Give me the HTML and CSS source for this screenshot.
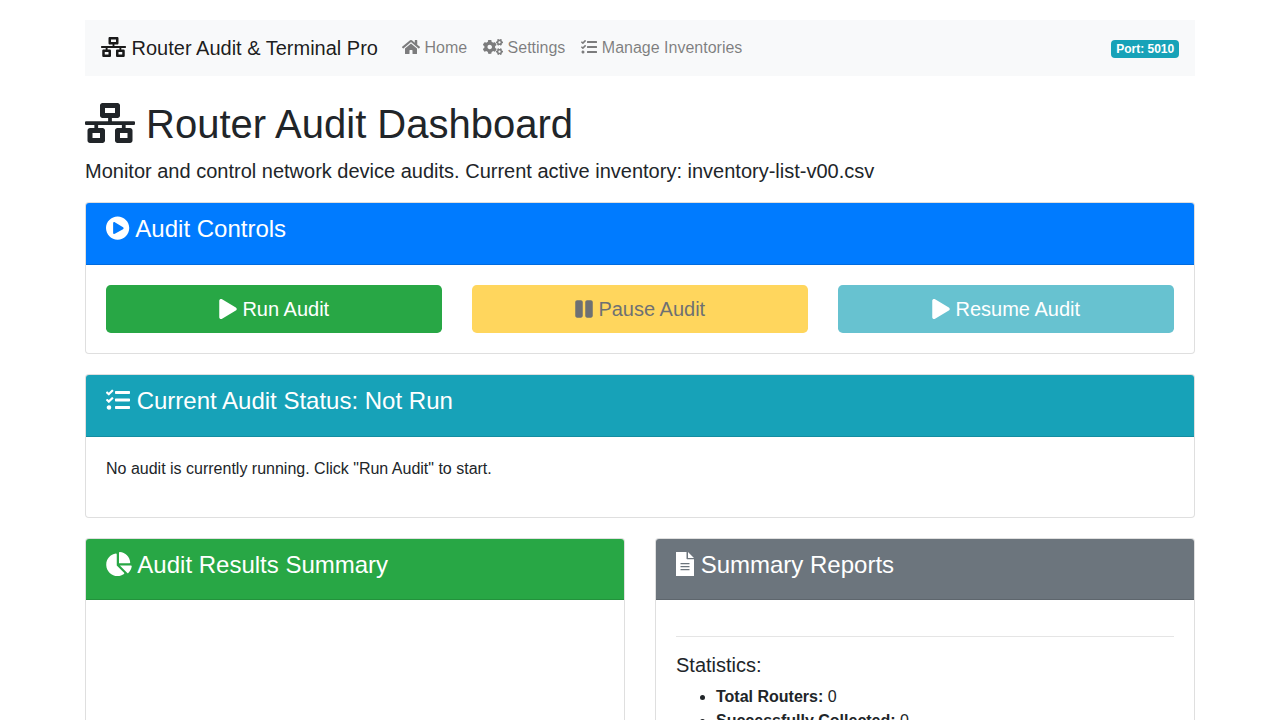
FILE: index.html
```html
<!DOCTYPE html>
<html lang="en">
<head>
<meta charset="utf-8">
<title>Router Audit &amp; Terminal Pro</title>
<link rel="stylesheet" href="styles.css">
</head>
<body>
<svg class="sprite" aria-hidden="true">
  <symbol id="network" viewBox="0 0 640 512"><path d="M640 264v-16c0-8.84-7.16-16-16-16H344v-40h72c17.67 0 32-14.33 32-32V32c0-17.67-14.33-32-32-32H224c-17.67 0-32 14.33-32 32v128c0 17.67 14.33 32 32 32h72v40H16c-8.84 0-16 7.16-16 16v16c0 8.84 7.16 16 16 16h104v40H64c-17.67 0-32 14.33-32 32v128c0 17.67 14.33 32 32 32h160c17.67 0 32-14.33 32-32V352c0-17.67-14.33-32-32-32h-56v-40h304v40h-56c-17.67 0-32 14.33-32 32v128c0 17.67 14.33 32 32 32h160c17.67 0 32-14.33 32-32V352c0-17.67-14.33-32-32-32h-56v-40h104c8.84 0 16-7.16 16-16zM256 128V64h128v64H256zm-64 320H96v-64h96v64zm352 0h-96v-64h96v64z"/></symbol>
  <symbol id="home" viewBox="0 0 576 512"><path d="M280.37 148.26L96 300.11V464a16 16 0 0 0 16 16l112.06-.29a16 16 0 0 0 15.92-16V368a16 16 0 0 1 16-16h64a16 16 0 0 1 16 16v95.64a16 16 0 0 0 16 16.05L464 480a16 16 0 0 0 16-16V300L295.67 148.26a12.19 12.19 0 0 0-15.3 0zM571.6 251.47L488 182.56V44.05a12 12 0 0 0-12-12h-56a12 12 0 0 0-12 12v72.61L318.47 43a48 48 0 0 0-61 0L4.34 251.47a12 12 0 0 0-1.6 16.9l25.5 31A12 12 0 0 0 45.15 301l235.22-193.74a12.19 12.19 0 0 1 15.3 0L530.9 301a12 12 0 0 0 16.9-1.6l25.5-31a12 12 0 0 0-1.7-16.93z"/></symbol>
  <symbol id="cogs" viewBox="0 0 640 512">
    <path id="small-cog" d="M512.1 191l-8.2 14.3c-3 5.3-9.4 7.5-15.1 5.4-11.8-4.4-22.6-10.7-32.1-18.6-4.6-3.8-5.8-10.5-2.8-15.7l8.2-14.3c-6.9-8-12.3-17.3-15.9-27.4h-16.5c-6 0-11.2-4.3-12.2-10.3-2-12-2.1-24.6 0-37.1 1-6 6.2-10.4 12.2-10.4h16.5c3.6-10.1 9-19.4 15.9-27.4l-8.2-14.3c-3-5.2-1.9-11.9 2.8-15.7 9.5-7.9 20.4-14.2 32.1-18.6 5.7-2.1 12.1.1 15.1 5.4l8.2 14.3c10.5-1.9 21.2-1.9 31.7 0L552 6.3c3-5.3 9.4-7.5 15.1-5.4 11.8 4.4 22.6 10.7 32.1 18.6 4.6 3.8 5.8 10.5 2.8 15.7l-8.2 14.3c6.9 8 12.3 17.3 15.9 27.4h16.5c6 0 11.2 4.3 12.2 10.3 2 12 2.1 24.6 0 37.1-1 6-6.2 10.4-12.2 10.4h-16.5c-3.6 10.1-9 19.4-15.9 27.4l8.2 14.3c3 5.2 1.9 11.9-2.8 15.7-9.5 7.9-20.4 14.2-32.1 18.6-5.7 2.1-12.1-.1-15.1-5.4l-8.2-14.3c-10.4 1.9-21.2 1.9-31.7 0zm-10.5-58.8c38.5 29.6 82.4-14.3 52.8-52.8-38.5-29.7-82.4 14.3-52.8 52.8z"/>
    <use href="#small-cog" transform="translate(0 299)"/>
    <path d="M386.3 286.1l33.7 16.8c10.1 5.8 14.5 18.1 10.5 29.1-8.9 24.2-26.4 46.4-42.6 65.8-7.4 8.9-20.2 11.1-30.3 5.3l-29.1-16.8c-16 13.7-34.6 24.6-54.9 31.7v33.6c0 11.6-8.3 21.6-19.7 23.6-24.6 4.2-50.4 4.4-75.9 0-11.5-2-20-11.9-20-23.6V418c-20.3-7.2-38.9-18-54.9-31.7L74 403c-10 5.8-22.9 3.6-30.3-5.3-16.2-19.4-33.3-41.6-42.2-65.7-4-10.9.4-23.2 10.5-29.1l33.3-16.8c-3.9-20.9-3.9-42.4 0-63.4L12 205.8c-10.1-5.8-14.6-18.1-10.5-29 8.9-24.2 26-46.4 42.2-65.8 7.4-8.9 20.2-11.1 30.3-5.3l29.1 16.8c16-13.7 34.6-24.6 54.9-31.7V57.1c0-11.5 8.2-21.5 19.6-23.5 24.6-4.2 50.5-4.4 76-.1 11.5 2 20 11.9 20 23.6v33.6c20.3 7.2 38.9 18 54.9 31.7l29.1-16.8c10-5.8 22.9-3.6 30.3 5.3 16.2 19.4 33.2 41.6 42.1 65.8 4 10.9.1 23.2-10 29.1l-33.7 16.8c3.9 21 3.9 42.5 0 63.5zm-117.6 21.1c59.2-77-28.7-164.9-105.7-105.7-59.2 77 28.7 164.9 105.7 105.7z"/>
  </symbol>
  <symbol id="tasks" viewBox="0 0 512 512"><path d="M139.61 35.5a12 12 0 0 0-17 0L58.93 98.81l-22.7-22.12a12 12 0 0 0-17 0L3.53 92.41a12 12 0 0 0 0 17l47.59 47.4a12.78 12.78 0 0 0 17.61 0l15.59-15.62L156.52 69a12.09 12.09 0 0 0 .09-17zm0 159.19a12 12 0 0 0-17 0l-63.68 63.72-22.7-22.1a12 12 0 0 0-17 0L3.53 252a12 12 0 0 0 0 17L51 316.5a12.77 12.77 0 0 0 17.6 0l15.7-15.69 72.2-72.22a12 12 0 0 0 .09-16.9zM64 368c-26.49 0-48.59 21.5-48.59 48S37.53 464 64 464a48 48 0 0 0 0-96zm432 16H208a16 16 0 0 0-16 16v32a16 16 0 0 0 16 16h288a16 16 0 0 0 16-16v-32a16 16 0 0 0-16-16zm0-320H208a16 16 0 0 0-16 16v32a16 16 0 0 0 16 16h288a16 16 0 0 0 16-16V80a16 16 0 0 0-16-16zm0 160H208a16 16 0 0 0-16 16v32a16 16 0 0 0 16 16h288a16 16 0 0 0 16-16v-32a16 16 0 0 0-16-16z"/></symbol>
  <symbol id="play-circle" viewBox="8 0 512 512"><path d="M256 8C119 8 8 119 8 256s111 248 248 248 248-111 248-248S393 8 256 8zm115.7 272l-176 101c-15.8 8.8-35.7-2.5-35.7-21V152c0-18.4 19.8-29.8 35.7-21l176 107c16.4 9.2 16.4 32.9 0 42z"/></symbol>
  <symbol id="play" viewBox="0 0 448 512"><path d="M424.4 214.7L72.4 6.6C43.8-10.3 0 6.1 0 47.9V464c0 37.5 40.7 60.1 72.4 41.3l352-208c31.4-18.5 31.5-64.1 0-82.6z"/></symbol>
  <symbol id="pause" viewBox="0 0 448 512"><path d="M144 479H48c-26.5 0-48-21.5-48-48V79c0-26.5 21.5-48 48-48h96c26.5 0 48 21.5 48 48v352c0 26.5-21.5 48-48 48zm304-48V79c0-26.5-21.5-48-48-48h-96c-26.5 0-48 21.5-48 48v352c0 26.5 21.5 48 48 48h96c26.5 0 48-21.5 48-48z"/></symbol>
  <symbol id="pie" viewBox="0 0 544 512"><path d="M527.79 288H290.5l158.03 158.03c6.04 6.04 15.98 6.53 22.19.68 38.7-36.46 65.32-85.61 73.13-140.86 1.34-9.46-6.51-17.85-16.06-17.85zm-15.83-64.8C503.72 103.74 408.26 8.28 288.8.04 279.68-.59 272 7.1 272 16.24V240h223.77c9.14 0 16.82-7.68 16.19-16.8zM224 288V50.71c0-9.55-8.39-17.4-17.84-16.06C86.99 51.49-4.1 155.6.14 280.37 4.5 408.51 114.83 513.59 243.03 511.98c50.4-.63 96.97-16.87 135.26-44.03 7.9-5.6 8.42-17.23 1.57-24.08L224 288z"/></symbol>
  <symbol id="file" viewBox="0 0 384 512"><path fill-rule="evenodd" d="M224 0H4Q0 0 0 4V508Q0 512 4 512H380Q384 512 384 508V152H236Q224 152 224 140ZM96 235H288V259H96ZM96 299H288V323H96ZM96 363H288V387H96ZM256 0L384 128H256Z"/></symbol>
</svg>
<div class="container">
  <nav class="navbar">
    <a class="brand"><svg class="icon w-640"><use href="#network"/></svg> Router Audit &amp; Terminal Pro</a>
    <ul class="nav-list">
      <li><a class="nav-link"><svg class="icon w-576"><use href="#home"/></svg> Home</a></li>
      <li><a class="nav-link"><svg class="icon w-640"><use href="#cogs"/></svg> Settings</a></li>
      <li><a class="nav-link"><svg class="icon w-512"><use href="#tasks"/></svg> Manage Inventories</a></li>
    </ul>
    <span class="nav-text"><span class="badge">Port: 5010</span></span>
  </nav>

  <h1><svg class="icon w-640"><use href="#network"/></svg> Router Audit Dashboard</h1>
  <p class="lead">Monitor and control network device audits. Current active inventory: inventory-list-v00.csv</p>

  <section class="card">
    <div class="card-header primary"><h4><svg class="icon w-512"><use href="#play-circle"/></svg> Audit Controls</h4></div>
    <div class="card-body columns">
      <button class="btn success"><svg class="icon w-448"><use href="#play"/></svg> Run Audit</button>
      <button class="btn warning" disabled><svg class="icon w-448"><use href="#pause"/></svg> Pause Audit</button>
      <button class="btn info" disabled><svg class="icon w-448"><use href="#play"/></svg> Resume Audit</button>
    </div>
  </section>

  <section class="card">
    <div class="card-header info"><h4><svg class="icon w-512"><use href="#tasks"/></svg> Current Audit Status: Not Run</h4></div>
    <div class="card-body"><p>No audit is currently running. Click "Run Audit" to start.</p></div>
  </section>

  <div class="columns">
    <section class="card">
      <div class="card-header success"><h4><svg class="icon w-544"><use href="#pie"/></svg> Audit Results Summary</h4></div>
      <div class="card-body chart"></div>
    </section>
    <section class="card">
      <div class="card-header secondary"><h4><svg class="icon w-384"><use href="#file"/></svg> Summary Reports</h4></div>
      <div class="card-body">
        <hr>
        <h5>Statistics:</h5>
        <ul class="stats">
          <li><strong>Total Routers:</strong> 0</li>
          <li><strong>Successfully Collected:</strong> 0</li>
        </ul>
      </div>
    </section>
  </div>
</div>
</body>
</html>
```
FILE: styles.css
```css
*, *::before, *::after { box-sizing: border-box; }
html { overflow: hidden; }
body {
  height: 720px;
  margin: 0;
  padding-top: 20px;
  overflow: hidden;
  background: #fff;
  color: #212529;
  font: 400 16px/1.5 "Liberation Sans", Arial, sans-serif;
}
.sprite { display: none; }
.container { width: 1140px; margin: 0 auto; padding: 0 15px; }

.icon {
  display: inline-block;
  height: 1em;
  vertical-align: -0.125em;
  fill: currentColor;
  overflow: visible;
}
.w-384 { width: 0.75em; }
.w-448 { width: 0.9em; }
.w-512 { width: 1em; }
.w-544 { width: 26px; }
.w-576 { width: 1.125em; }
.w-640 { width: 1.25em; }

.navbar {
  display: flex;
  align-items: center;
  margin-bottom: 24px;
  padding: 8px 16px;
  background: #f8f9fa;
}
.brand {
  margin-right: 16px;
  padding: 5px 0;
  color: rgba(0, 0, 0, 0.9);
  font-size: 20px;
  white-space: nowrap;
}
.brand .icon { vertical-align: -2px; }
.nav-list { display: flex; margin: 0 auto 0 0; padding: 0; list-style: none; }
.nav-link { display: block; padding: 8px; color: rgba(0, 0, 0, 0.5); }
.nav-text { padding: 8px 0; }
.badge {
  display: inline-block;
  padding: 3px 4.8px;
  border-radius: 4px;
  background: #17a2b8;
  color: #fff;
  font-size: 12px;
  font-weight: 700;
  line-height: 1;
  vertical-align: baseline;
}

h1, h4, h5 { margin: 0 0 8px; font-weight: 400; line-height: 1.2; }
h1 { font-size: 40px; }
h4 { font-size: 24px; }
h5 { font-size: 20px; }
p { margin: 0 0 16px; }
.lead { font-size: 20px; font-weight: 300; }

.card {
  display: flex;
  flex-direction: column;
  margin-bottom: 20px;
  border: 1px solid rgba(0, 0, 0, 0.125);
  border-radius: 4px;
  background: #fff;
}
.card-header {
  padding: 12px 20px;
  border-bottom: 1px solid rgba(0, 0, 0, 0.125);
  border-radius: 3px 3px 0 0;
  color: #fff;
}
.card-body { padding: 20px; }
.columns { display: grid; grid-auto-flow: column; grid-auto-columns: minmax(0, 1fr); gap: 30px; }
.chart { min-height: 300px; }

.btn {
  padding: 8px 16px;
  border: 1px solid transparent;
  border-radius: 4.8px;
  color: #fff;
  font: 400 20px/1.5 "Liberation Sans", Arial, sans-serif;
}
.btn .icon { vertical-align: -3px; }
.btn:disabled { opacity: 0.65; }

.primary { background-color: #007bff; }
.success { background-color: #28a745; }
.info { background-color: #17a2b8; }
.secondary { background-color: #6c757d; }
.warning { background-color: #ffc107; color: #212529; }

hr { margin: 16px 0; border: 0; border-top: 1px solid rgba(0, 0, 0, 0.1); }
.stats { margin: 0 0 16px; padding-left: 40px; }
strong { font-weight: 700; }
```
